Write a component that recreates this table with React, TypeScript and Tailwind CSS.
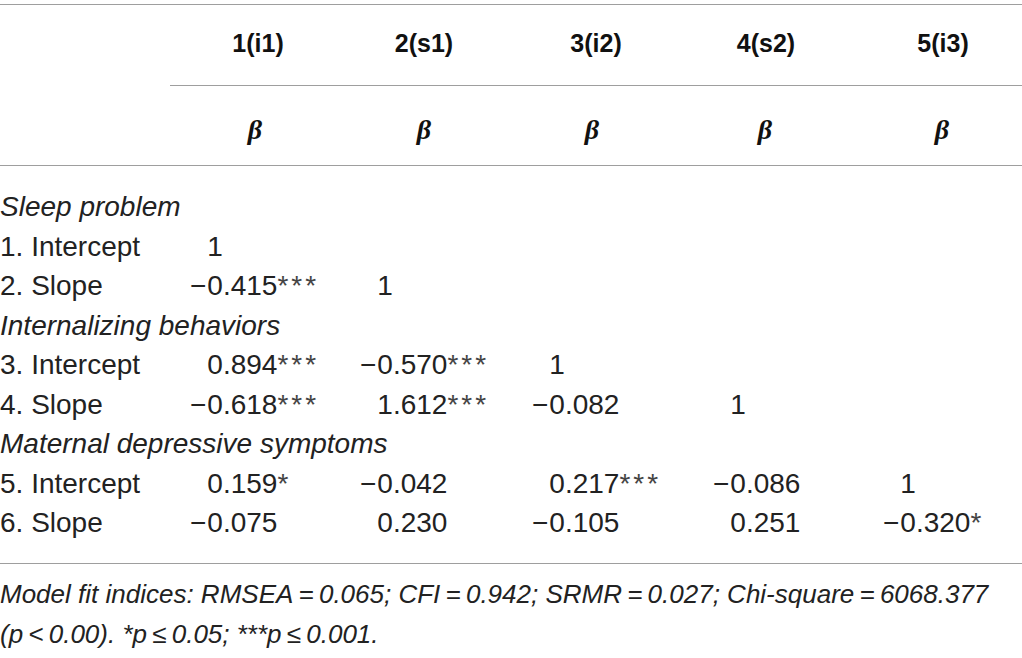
import React from "react";

const HEAD_CENTERS = ["ml-[88px]", "ml-[84px]", "ml-[84px]", "ml-[73px]", "ml-[80px]"];
const BETA_CENTERS = ["ml-[85px]", "ml-[84px]", "ml-[80px]", "ml-[72px]", "ml-[79px]"];
const HEADS = ["1(i1)", "2(s1)", "3(i2)", "4(s2)", "5(i3)"];

function Num({ v }: { v: string }) {
  if (!v) return null;
  const neg = v.startsWith("-");
  const m = v.replace(/^-/, "").match(/^([^*]*)(\**)$/);
  const body = m ? m[1] : v;
  const stars = m ? m[2] : "";
  return (
    <span className="whitespace-nowrap">
      <span className={neg ? "mr-[1px]" : "invisible mr-[1px]"}>−</span>
      {body}
      {stars && <span className="tracking-[3px] text-[#444]">{stars}</span>}
    </span>
  );
}

function DataRow({ label, cells }: { label: string; cells: string[] }) {
  return (
    <div className="grid grid-cols-[170px_170px_172px_181px_170px_1fr] leading-[39.5px]">
      <div className="whitespace-nowrap">{label}</div>
      {[0, 1, 2, 3, 4].map((i) => (
        <div key={i} className="pl-[20px]">
          <Num v={cells[i] || ""} />
        </div>
      ))}
    </div>
  );
}

function Section({ title }: { title: string }) {
  return <div className="italic leading-[39.5px] whitespace-nowrap">{title}</div>;
}

export default function App() {
  return (
    <div className="w-[1022px] h-[658px] bg-white text-[#222] font-['Liberation_Sans',Arial,sans-serif] overflow-hidden">
      <div className="pt-[4px]">
        <div className="h-px bg-[#9e9e9e]" />
        <div className="grid grid-cols-[170px_170px_172px_181px_170px_1fr] h-[80px] items-center text-[25px] font-bold text-[#111]">
          <div />
          {HEADS.map((h, i) => (
            <div key={h} className={`${HEAD_CENTERS[i]} w-0 flex justify-center whitespace-nowrap pb-[2px]`}>
              {h}
            </div>
          ))}
        </div>
        <div className="ml-[170px] h-px bg-[#9e9e9e]" />
        <div className="grid grid-cols-[170px_170px_172px_181px_170px_1fr] h-[79px] items-center text-[28px] font-bold italic font-['Liberation_Serif',serif] text-[#111]">
          <div />
          {HEADS.map((h, i) => (
            <div key={h} className={`${BETA_CENTERS[i]} w-0 flex justify-center pt-[8px]`}>
              β
            </div>
          ))}
        </div>
        <div className="h-px bg-[#9e9e9e]" />
        <div className="pt-[21px] text-[28px]">
          <Section title="Sleep problem" />
          <DataRow label="1. Intercept" cells={["1"]} />
          <DataRow label="2. Slope" cells={["-0.415***", "1"]} />
          <Section title="Internalizing behaviors" />
          <DataRow label="3. Intercept" cells={["0.894***", "-0.570***", "1"]} />
          <DataRow label="4. Slope" cells={["-0.618***", "1.612***", "-0.082", "1"]} />
          <Section title="Maternal depressive symptoms" />
          <DataRow label="5. Intercept" cells={["0.159*", "-0.042", "0.217***", "-0.086", "1"]} />
          <DataRow label="6. Slope" cells={["-0.075", "0.230", "-0.105", "0.251", "-0.320*"]} />
        </div>
        <div className="mt-[20px] h-px bg-[#9e9e9e]" />
        <div className="pt-[10px] text-[26px] italic leading-[40px]">
          <div className="whitespace-nowrap">
            Model fit indices: RMSEA{"\u2009=\u2009"}0.065; CFI{"\u2009=\u2009"}0.942; SRMR{"\u2009=\u2009"}0.027; Chi-square{"\u2009=\u2009"}6068.377
          </div>
          <div className="whitespace-nowrap">
            (p{"\u2009<\u2009"}0.00). *p{"\u2009≤\u2009"}0.05; ***p{"\u2009≤\u2009"}0.001.
          </div>
        </div>
      </div>
    </div>
  );
}
